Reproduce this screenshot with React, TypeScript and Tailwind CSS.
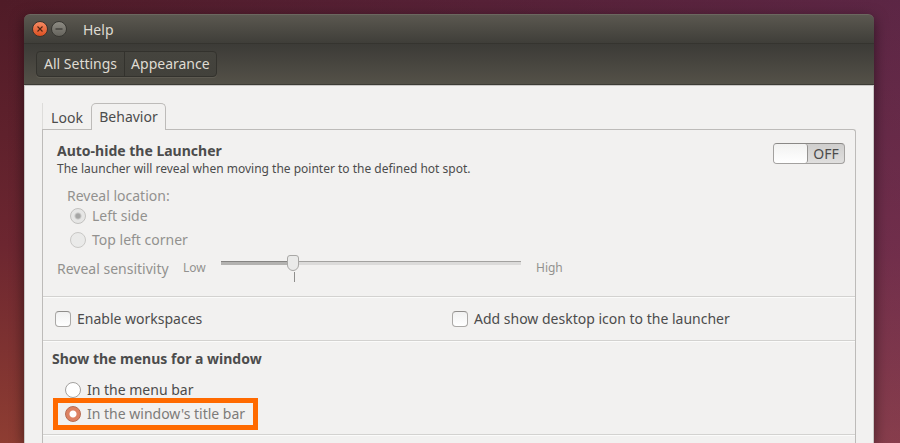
import React, { useState } from 'react';

const radioClass =
    'm-0 size-4 shrink-0 appearance-none rounded-full border border-[#a3a19f] bg-white checked:border-[#b56a50] checked:bg-[radial-gradient(circle,#ffffff_0_3px,#dd8263_4px)] disabled:border-[#c9c8c6] disabled:bg-[#eaeae9] disabled:checked:border-[#c2c1bf] disabled:checked:bg-[radial-gradient(circle,#a5a5a4_0_2px,#e6e6e5_4px)]';

const checkClass =
    'm-0 size-4 shrink-0 appearance-none rounded-[4px] border border-[#aaa8a6] border-t-[#8f8d8b] bg-linear-to-b from-[#f1f1f1] to-white checked:from-[#dd8263] checked:to-[#dd8263]';

const sectionClass =
    'border-b border-b-[#d3d2d0] shadow-[inset_0_1px_0_#fbfbfa]';

function TitleBar() {
    return (
        <header className="flex h-[29px] items-center rounded-t-[6px] border-t border-[#6b675f] bg-linear-to-b from-[#5b5850] to-[#3f3e39] pl-2">
            <button
                aria-label="Close"
                className="grid size-4 place-items-center rounded-full border border-[#3a332d] bg-linear-to-b from-[#f58a62] to-[#dc4f1e]"
            >
                <svg viewBox="0 0 8 8" className="size-2" fill="none" stroke="#4d2413" strokeWidth="1.1">
                    <path d="M1.5 1.5 6.5 6.5M6.5 1.5 1.5 6.5" />
                </svg>
            </button>
            <button
                aria-label="Minimize"
                className="ml-[3px] grid size-4 place-items-center rounded-full border border-[#383732] bg-linear-to-b from-[#8d8b83] to-[#66645d]"
            >
                <svg viewBox="0 0 8 8" className="size-2" fill="none" stroke="#32312c" strokeWidth="1.1">
                    <path d="M.5 4H7.5" />
                </svg>
            </button>
            <h1 className="ml-4 text-[14px] text-[#dfdbd2]">Help</h1>
        </header>
    );
}

function ToolBar() {
    return (
        <nav className="flex h-[42px] items-center border-t border-b border-t-[#35342f] border-b-[#3c3b35] bg-linear-to-b from-[#3c3b37] to-[#545148] px-3">
            <div className="flex h-[26px] divide-x divide-[#33322d] rounded-[4px] border border-[#33322d] bg-linear-to-b from-[#45443e] to-[#42413b] text-[14px] leading-5 text-[#dfdbd2] shadow-[0_1px_0_#5d5a51]">
                <button className="px-[7px]">All Settings</button>
                <button className="px-[6px]">Appearance</button>
            </div>
        </nav>
    );
}

function Tabs() {
    return (
        <div role="tablist" className="flex h-[26px] text-[14px]">
            <button
                role="tab"
                aria-selected="false"
                className="w-[49px] border-l border-[#dddcda] pt-[2px] text-center"
            >
                Look
            </button>
            <button
                role="tab"
                aria-selected="true"
                className="relative z-10 -mb-px w-[75px] rounded-t-[5px] border border-b-0 border-[#bdbbb9] bg-[#f2f1f0] pb-[2px] text-center"
            >
                Behavior
            </button>
        </div>
    );
}

function AutoHide() {
    return (
        <section className="flex items-start justify-between border-b border-b-[#d3d2d0] pt-[11px] pr-[10px] pb-4 pl-[14px]">
            <div>
                <h2 className="text-[14px] leading-5 font-bold">Auto-hide the Launcher</h2>
                <p className="text-[12px] leading-4">
                    The launcher will reveal when moving the pointer to the defined hot spot.
                </p>
                <fieldset disabled className="mt-[11px] pl-[10px] text-[14px] leading-5 text-[#92918f]">
                    <legend className="leading-4">Reveal location:</legend>
                    <label className="flex h-6 items-center gap-[6px] pl-[3px]">
                        <input type="radio" name="location" defaultChecked className={radioClass} />
                        Left side
                    </label>
                    <label className="flex h-6 items-center gap-[6px] pl-[3px]">
                        <input type="radio" name="location" className={radioClass} />
                        Top left corner
                    </label>
                </fieldset>
                <div className="mt-1 flex h-6 items-center text-[#92918f]">
                    <label htmlFor="sensitivity" className="w-[126px] text-[14px] whitespace-nowrap">
                        Reveal sensitivity
                    </label>
                    <span className="w-[38px] text-[12px]">Low</span>
                    <div className="relative h-[26px] w-[300px]">
                        <input
                            id="sensitivity"
                            type="range"
                            min="0"
                            max="100"
                            defaultValue="23"
                            disabled
                            className="block h-4 w-full appearance-none bg-[linear-gradient(to_bottom,#858482_1px,#b3b2b0_1px),linear-gradient(to_bottom,#a3a2a0_1px,#dcdbda_1px)] bg-[size:70px_4px,100%_4px] bg-[position:left_center,left_center] bg-no-repeat [&::-webkit-slider-thumb]:h-4 [&::-webkit-slider-thumb]:w-3 [&::-webkit-slider-thumb]:appearance-none [&::-webkit-slider-thumb]:rounded-t-[3px] [&::-webkit-slider-thumb]:rounded-b-[6px] [&::-webkit-slider-thumb]:border [&::-webkit-slider-thumb]:border-[#a9a8a6] [&::-webkit-slider-thumb]:bg-[#eaeae9]"
                        />
                        <span className="absolute top-[17px] left-[73px] h-[10px] w-px bg-[#8f8e8c]" />
                    </div>
                    <span className="ml-[15px] text-[12px]">High</span>
                </div>
            </div>
            <OffSwitch />
        </section>
    );
}

function OffSwitch() {
    const [on, setOn] = useState(false);
    return (
        <button
            role="switch"
            aria-checked={on}
            aria-label="Auto-hide the Launcher"
            onClick={() => setOn(!on)}
            className={`mt-[2px] flex h-[21px] w-[72px] shrink-0 items-stretch rounded-[4px] border border-[#a3a19f] border-t-[#8a8886] bg-linear-to-b from-[#cfcecd] to-[#e0dfde] text-[14px] ${on ? 'flex-row-reverse' : ''}`}
        >
            <span className="w-[34px] rounded-[3px] border-r border-[#969492] bg-linear-to-b from-[#f2f2f1] to-white" />
            <span className="flex flex-1 items-center justify-center">{on ? 'ON' : 'OFF'}</span>
        </button>
    );
}

export default function App() {
    return (
        <div className="flex min-h-screen flex-col overflow-hidden bg-[linear-gradient(to_right,transparent,rgba(120,62,132,0.32)),linear-gradient(to_bottom,#4f1b27,#6c2630_55%,#8e3d32)] pt-[14px] pr-[26px] pl-6 font-['Noto_Sans','Open_Sans',sans-serif] text-[#4c4c4c]">
            <div className="flex flex-1 flex-col rounded-t-[6px] shadow-[0_4px_14px_0_rgba(0,0,0,0.5)]">
                <TitleBar />
                <ToolBar />
                <main className="flex flex-1 flex-col border border-b-0 border-[#c9c7c5] bg-[#f2f1f0] px-[17px] pt-[17px]">
                    <Tabs />
                    <div role="tabpanel" className="flex-1 rounded-tr-[3px] border border-b-0 border-[#bdbbb9]">
                        <AutoHide />
                        <section className={`flex h-11 items-center pl-3 text-[14px] ${sectionClass}`}>
                            <label className="flex w-[397px] items-center gap-[6px]">
                                <input type="checkbox" className={checkClass} />
                                Enable workspaces
                            </label>
                            <label className="flex items-center gap-[6px]">
                                <input type="checkbox" className={checkClass} />
                                Add show desktop icon to the launcher
                            </label>
                        </section>
                        <section className={`pt-2 pb-2 pl-[9px] text-[14px] leading-5 ${sectionClass}`}>
                            <h2 className="mb-[9px] font-bold">Show the menus for a window</h2>
                            <label className="flex h-6 items-center gap-[6px] pl-[13px]">
                                <input type="radio" name="menus" className={radioClass} />
                                In the menu bar
                            </label>
                            <div className="relative w-fit">
                                <label className="flex h-6 items-center gap-[6px] pl-[13px] text-[#7d7b79]">
                                    <input type="radio" name="menus" defaultChecked className={radioClass} />
                                    In the window's title bar
                                </label>
                                {/* highlight around the option to pick */}
                                <span className="pointer-events-none absolute -top-1 -right-[13px] -bottom-1 left-px border-5 border-[#ff6a00]" />
                            </div>
                        </section>
                        <div className="h-2 shadow-[inset_0_1px_0_#fbfbfa]" />
                    </div>
                </main>
            </div>
        </div>
    );
}
